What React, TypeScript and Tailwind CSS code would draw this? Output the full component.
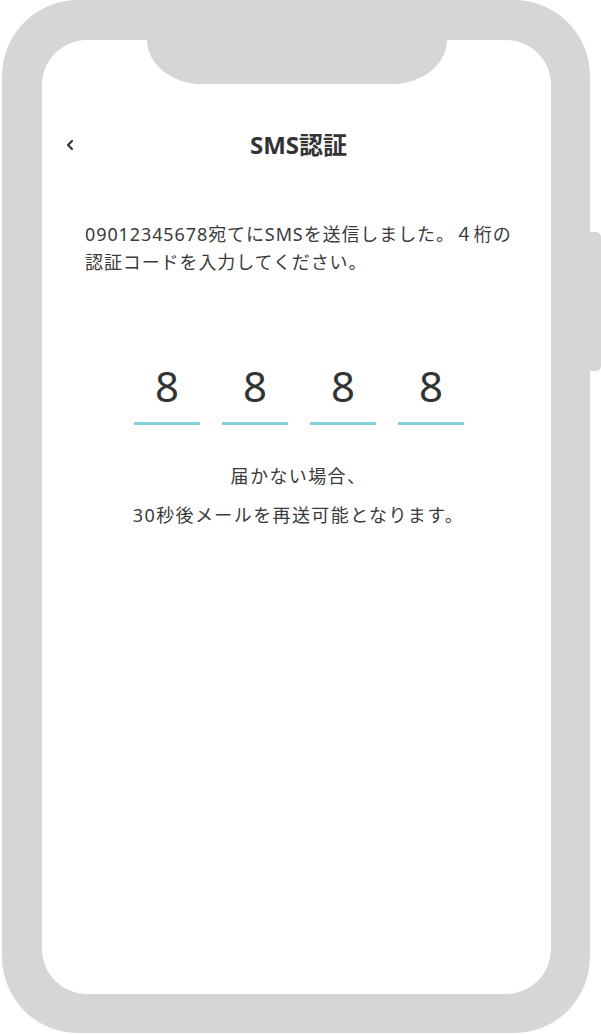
import { ChevronLeft } from 'lucide-react';

const font = { fontFamily: '"Noto Sans", "Noto Sans CJK JP", sans-serif' };

export default function App() {
  const digits = ['8', '8', '8', '8'];

  return (
    <div className="relative h-[1034px] w-[601px] bg-white" style={font}>
      {/* side button */}
      <div className="absolute right-0 top-[232px] h-[139px] w-[14px] rounded-r-[5px] bg-[#d6d6d6]" />

      {/* phone body */}
      <div className="relative ml-[2px] h-[1033px] w-[588px] rounded-[76px] bg-[#d6d6d6] p-[40px] pr-[39px] pb-[39px]">
        <div className="relative h-full w-full overflow-hidden rounded-[45px] bg-white">
          {/* notch */}
          <div className="absolute left-[105px] top-0 h-[44px] w-[300px] rounded-b-[55px_44px] bg-[#d6d6d6]" />

          <div className="relative mt-[80px] flex h-[50px] items-center justify-center">
            <ChevronLeft size={16} strokeWidth={3.2} className="absolute left-[20px] text-[#333]" />
            <h1 className="pl-[4px] text-[24px] font-bold text-[#333]">SMS認証</h1>
          </div>

          <p className="ml-[43px] mt-[50px] w-[440px] text-[18px] leading-[28px] tracking-[0.9px] text-[#3a3a3a]">
            09012345678宛てにSMSを送信しました。４桁の認証コードを入力してください。
          </p>

          <div className="mt-[85px] flex justify-center gap-[22px] pl-[5px]">
            {digits.map((d, i) => (
              <div key={i} className="flex w-[66px] flex-col items-center">
                <span className="h-[50px] text-[42px] font-normal leading-[50px] text-[#333]">{d}</span>
                <div className="mt-[11px] h-[3px] w-full bg-[#7fd0d8]" />
              </div>
            ))}
          </div>

          <div className="mt-[32px] pl-[4px] text-center text-[18px] leading-[39px] tracking-[1.4px] text-[#3a3a3a]">
            <p>届かない場合、</p>
            <p>30秒後メールを再送可能となります。</p>
          </div>
        </div>
      </div>
    </div>
  );
}
